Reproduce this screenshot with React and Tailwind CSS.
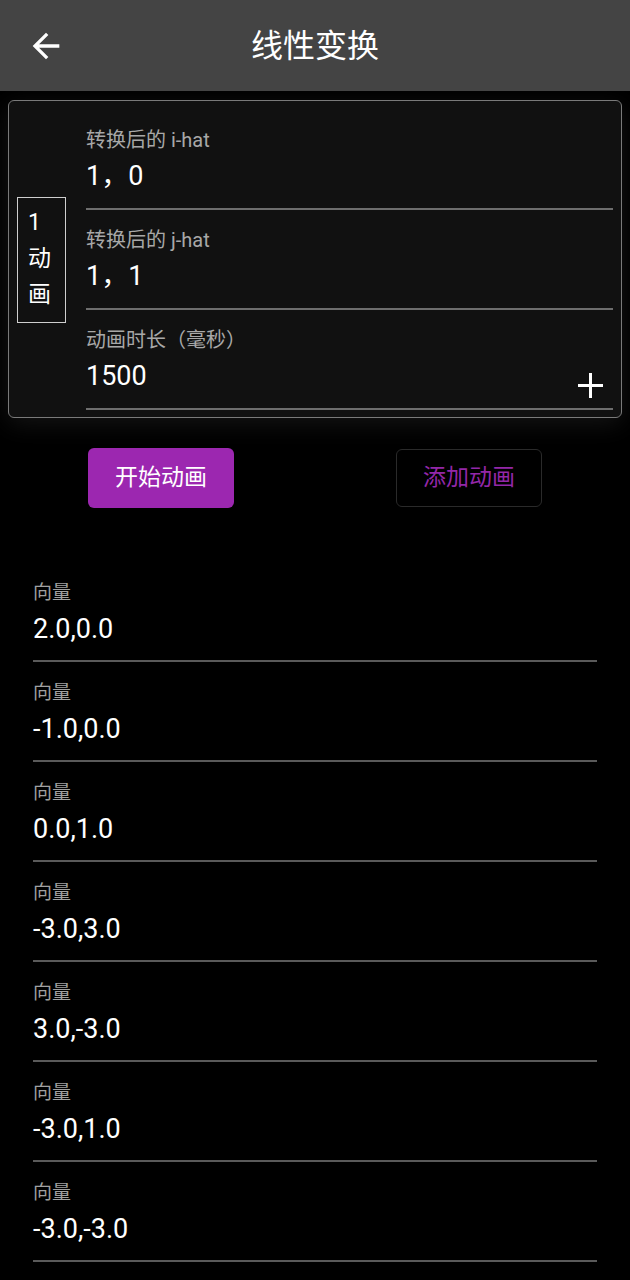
import React from "react";

const font = { fontFamily: 'Roboto, "Noto Sans CJK SC", sans-serif' };

function Field({ label, value, children }) {
  return (
    <div className="relative h-[100px] border-b-2 border-[#6e6e6e] pt-[19px]">
      <div className="text-[20px] leading-[22px] text-[#a8a8a8]">{label}</div>
      <div className="mt-[9px] text-[27px] leading-[32px] text-white">{value}</div>
      {children}
    </div>
  );
}

function Item({ value }) {
  return (
    <div className="h-[100px] border-b-2 border-[#5a5a5a] pt-[20px]">
      <div className="text-[19px] leading-[22px] text-[#a0a0a0]">向量</div>
      <div className="mt-[9px] text-[27px] leading-[32px] text-white">{value}</div>
    </div>
  );
}

export default function App() {
  const vectors = ["2.0,0.0", "-1.0,0.0", "0.0,1.0", "-3.0,3.0", "3.0,-3.0", "-3.0,1.0", "-3.0,-3.0"];
  return (
    <div className="min-h-screen w-[630px] bg-black" style={font}>
      <div className="relative flex h-[91px] items-center justify-center bg-[#444444]">
        <svg className="absolute left-[26px] top-[26px]" width="40" height="40" viewBox="0 0 24 24" fill="white">
          <path d="M20 11H7.83l5.59-5.59L12 4l-8 8 8 8 1.41-1.41L7.83 13H20v-2z" />
        </svg>
        <div className="text-[32px] leading-[40px] text-white">线性变换</div>
      </div>

      <div className="mx-[8px] mt-[9px] flex items-center rounded-[6px] border border-[#7a7a7a] bg-[#111111] pb-[7px] pl-[8px] pr-[8px] pt-[9px] shadow-[0_6px_24px_rgba(255,255,255,0.08)]">
        <div className="flex w-[49px] flex-col items-start border-[1.5px] border-[#cfcfcf] px-[10px] pb-[9px] pt-[7px] text-[23px] leading-[36px] text-white">
          <span>1</span>
          <span>动</span>
          <span>画</span>
        </div>
        <div className="ml-[20px] flex-1">
          <Field label="转换后的 i-hat" value="1，0" />
          <Field label="转换后的 j-hat" value="1，1" />
          <Field label="动画时长（毫秒）" value="1500">
            <svg className="absolute bottom-[10px] right-[10px]" width="25" height="25" viewBox="0 0 25 25">
              <path d="M12.5 0v25M0 12.5h25" stroke="white" strokeWidth="3" />
            </svg>
          </Field>
        </div>
      </div>

      <div className="mt-[30px] flex items-start pl-[88px]">
        <div className="flex h-[60px] w-[146px] items-center justify-center rounded-[6px] bg-[#9c27b0] text-[23px] text-white">
          开始动画
        </div>
        <div className="ml-[162px] mt-[1px] flex h-[58px] w-[146px] items-center justify-center rounded-[6px] border border-[#2a2a2a] text-[23px] text-[#9327a8]">
          添加动画
        </div>
      </div>

      <div className="mx-[33px] mt-[54px] w-[564px]">
        {vectors.map((v) => (
          <Item key={v} value={v} />
        ))}
      </div>
    </div>
  );
}
